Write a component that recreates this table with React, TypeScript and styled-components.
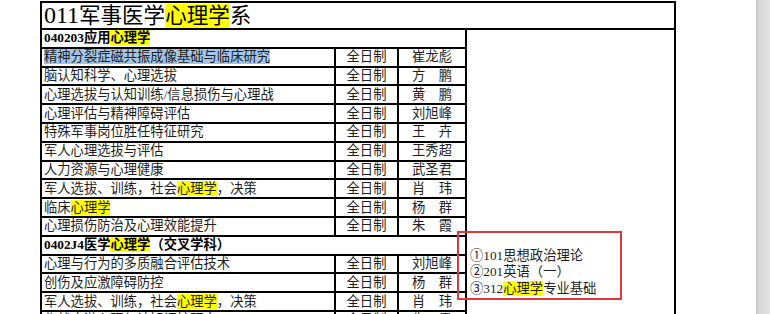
import React from 'react';
import styled, { createGlobalStyle } from 'styled-components';

const GlobalStyle = createGlobalStyle`
  html, body {
    margin: 0;
    padding: 0;
    background: #fff;
  }
  body {
    font-family: 'Liberation Serif', 'Noto Sans CJK SC', serif;
  }
`;

const Page = styled.div`
  display: flex;
  width: 770px;
  height: 314px;
  overflow: hidden;
  background: #fff;
`;

const Sheet = styled.div`
  flex: 1;
  padding: 1px 0 0 40px;
  overflow: hidden;
`;

const ScrollTrack = styled.div`
  width: 13px;
  border-left: 1px solid #c4c4c4;
  background: linear-gradient(to right, #d3d3d3, #e3e3e3);
`;

const Table = styled.table`
  border-collapse: collapse;
  table-layout: fixed;
  width: 636px;
  font-size: 13.3px;
  color: #1e1e1e;
`;

const Row = styled.tr<{ $tall?: boolean }>`
  height: ${(p) => (p.$tall ? '25.5px' : '18.8px')};
`;

const Cell = styled.td<{ $center?: boolean }>`
  border: 2px solid #000;
  padding: 0 2px;
  line-height: 16px;
  white-space: nowrap;
  overflow: hidden;
  text-align: ${(p) => (p.$center ? 'center' : 'left')};
  vertical-align: middle;
`;

const TitleCell = styled(Cell)`
  font-size: 21.5px;
  line-height: 24px;
  color: #000;
  & span.num {
    font-size: 24px;
  }
`;

const MajorCell = styled(Cell)`
  font-weight: bold;
  color: #000;
`;

const ExamCell = styled(Cell)<{ $joined?: boolean }>`
  vertical-align: top;
  overflow: visible;
  padding: 12px 0 0 3px;
  border-top-style: ${(p) => (p.$joined ? 'hidden' : 'solid')};
`;

const Mark = styled.span`
  background: #ffff00;
`;

const Selected = styled.span`
  background: #a3c5e6;
`;

const Notes = styled.div`
  position: relative;
  line-height: 16.7px;
`;

const RedBox = styled.div`
  position: absolute;
  left: -13px;
  top: -17px;
  width: 161px;
  height: 65px;
  border: 2px solid #e2383c;
  pointer-events: none;
`;

type Direction = { topic: React.ReactNode; tutor: string };

const hl = (before: React.ReactNode, after = '') => (
  <>
    {before}
    <Mark>心理学</Mark>
    {after}
  </>
);

const applied: Direction[] = [
  { topic: <Selected>精神分裂症磁共振成像基础与临床研究</Selected>, tutor: '崔龙彪' },
  { topic: '脑认知科学、心理选拔', tutor: '方　鹏' },
  { topic: '心理选拔与认知训练/信息损伤与心理战', tutor: '黄　鹏' },
  { topic: '心理评估与精神障碍评估', tutor: '刘旭峰' },
  { topic: '特殊军事岗位胜任特征研究', tutor: '王　卉' },
  { topic: '军人心理选拔与评估', tutor: '王秀超' },
  { topic: '人力资源与心理健康', tutor: '武圣君' },
  { topic: hl('军人选拔、训练，社会', '，决策'), tutor: '肖　玮' },
  { topic: hl('临床'), tutor: '杨　群' },
  { topic: '心理损伤防治及心理效能提升', tutor: '朱　霞' },
];

const medical: Direction[] = [
  { topic: '心理与行为的多质融合评估技术', tutor: '刘旭峰' },
  { topic: '创伤及应激障碍防控', tutor: '杨　群' },
  { topic: hl('军人选拔、训练，社会', '，决策'), tutor: '肖　玮' },
  { topic: '作战应激心理与认知调控研究', tutor: '朱　霞' },
];

const DirectionRow = ({ d }: { d: Direction }) => (
  <Row>
    <Cell>{d.topic}</Cell>
    <Cell $center>全日制</Cell>
    <Cell $center>{d.tutor}</Cell>
  </Row>
);

export default function App() {
  return (
    <Page>
      <GlobalStyle />
      <Sheet>
        <Table>
          <colgroup>
            <col style={{ width: 294 }} />
            <col style={{ width: 63 }} />
            <col style={{ width: 68 }} />
            <col style={{ width: 209 }} />
          </colgroup>
          <tbody>
            <Row $tall>
              <TitleCell colSpan={4}>
                {hl(
                  <>
                    <span className="num">011</span>军事医学
                  </>,
                  '系'
                )}
              </TitleCell>
            </Row>
            <Row>
              <MajorCell colSpan={3}>{hl('040203应用')}</MajorCell>
              <ExamCell rowSpan={applied.length + 1} />
            </Row>
            {applied.map((d, i) => (
              <DirectionRow key={i} d={d} />
            ))}
            <Row>
              <MajorCell colSpan={3}>{hl('0402J4医学', '（交叉学科）')}</MajorCell>
              <ExamCell rowSpan={medical.length + 1} $joined>
                <Notes>
                  <RedBox />
                  <div>①101思想政治理论</div>
                  <div>②201英语（一）</div>
                  <div>③312{hl('', '专业基础')}</div>
                </Notes>
              </ExamCell>
            </Row>
            {medical.map((d, i) => (
              <DirectionRow key={i} d={d} />
            ))}
          </tbody>
        </Table>
      </Sheet>
      <ScrollTrack />
    </Page>
  );
}
